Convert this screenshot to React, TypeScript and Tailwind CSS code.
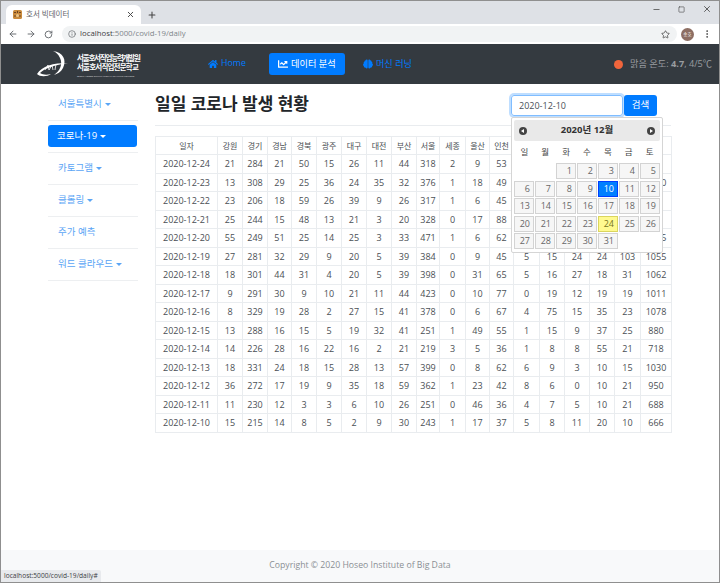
import { ArrowLeft, ArrowRight, Info, Minus, MoreVertical, Plus, RotateCw, Square, Star, X } from "lucide-react";
import { FaBrain, FaChartLine, FaHome } from "react-icons/fa";

const colWidths = [62, 25, 25, 24, 25, 25, 25, 25, 25, 23, 26, 24, 24, 26, 25, 25, 25, 26, 31];
// the last six column titles sit behind the date picker in the reference
const headers = ["일자", "강원", "경기", "경남", "경북", "광주", "대구", "대전", "부산", "서울", "세종", "울산", "인천", "", "", "", "", "", ""];

const rows: (string | number)[][] = [
  ["2020-12-24", 21, 284, 21, 50, 15, 26, 11, 44, 318, 2, 9, 53, "", "", "", "", "", ""],
  ["2020-12-23", 13, 308, 29, 25, 36, 24, 35, 32, 376, 1, 18, 49, "", "", "", "", "", 1090],
  ["2020-12-22", 23, 206, 18, 59, 26, 39, 9, 26, 317, 1, 6, 45, "", "", "", "", "", ""],
  ["2020-12-21", 25, 244, 15, 48, 13, 21, 3, 20, 328, 0, 17, 88, "", "", "", "", "", ""],
  ["2020-12-20", 55, 249, 51, 25, 14, 25, 3, 33, 471, 1, 6, 62, "", "", "", "", "", 1045],
  ["2020-12-19", 27, 281, 32, 29, 9, 20, 5, 39, 384, 0, 9, 45, 5, 15, 24, 24, 103, 1055],
  ["2020-12-18", 18, 301, 44, 31, 4, 20, 5, 39, 398, 0, 31, 65, 5, 16, 27, 18, 31, 1062],
  ["2020-12-17", 9, 291, 30, 9, 10, 21, 11, 44, 423, 0, 10, 77, 0, 19, 12, 19, 19, 1011],
  ["2020-12-16", 8, 329, 19, 28, 2, 27, 15, 41, 378, 0, 6, 67, 4, 75, 15, 35, 23, 1078],
  ["2020-12-15", 13, 288, 16, 15, 5, 19, 32, 41, 251, 1, 49, 55, 1, 15, 9, 37, 25, 880],
  ["2020-12-14", 14, 226, 28, 16, 22, 16, 2, 21, 219, 3, 5, 36, 1, 8, 8, 55, 21, 718],
  ["2020-12-13", 18, 331, 24, 18, 15, 28, 13, 57, 399, 0, 8, 62, 6, 9, 3, 10, 15, 1030],
  ["2020-12-12", 36, 272, 17, 19, 9, 35, 18, 59, 362, 1, 23, 42, 8, 6, 0, 10, 21, 950],
  ["2020-12-11", 11, 230, 12, 3, 3, 6, 10, 26, 251, 0, 46, 36, 4, 7, 5, 10, 21, 688],
  ["2020-12-10", 15, 215, 14, 8, 5, 2, 9, 30, 243, 1, 17, 37, 5, 8, 11, 20, 10, 666],
];

const sideItems = [
  { label: "서울특별시", caret: true },
  { label: "코로나-19", caret: true, active: true },
  { label: "카토그램", caret: true },
  { label: "클롤링", caret: true },
  { label: "주가 예측", caret: false },
  { label: "워드 클라우드", caret: true },
];

const Caret = () => (
  <span className="ml-[3px] inline-block h-0 w-0 border-x-[3px] border-t-[3px] border-x-transparent border-t-current align-middle" />
);

const BrowserChrome = () => (
  <div className="shrink-0">
    <div className="flex h-[23px] items-end bg-[#dee1e6] pl-[5px]">
      <div className="flex h-[19px] w-[135px] items-center rounded-t-[6px] bg-white pl-[7px] pr-[6px]">
        <svg width="9" height="9" viewBox="0 0 9 9">
          <rect width="9" height="9" rx="1.5" fill="#c98a3c" />
          <path d="M1 2.5h2M6 2.5h2M1 6h2M6 6h2M4.5 1v2" stroke="#6b4423" strokeWidth="1" />
          <circle cx="4.5" cy="5.5" r="1.5" fill="#e8c48a" />
        </svg>
        <span className="ml-[4px] flex-1 text-[7.5px] text-[#5f6368]">호서 빅데이터</span>
        <X size={9} strokeWidth={2.5} className="text-[#444]" />
      </div>
      <Plus size={10} strokeWidth={2.5} className="mb-[4px] ml-[6px] text-[#444]" />
      <div className="flex-1" />
      <div className="mb-[10px] flex items-center gap-[17px] pr-[7px] text-[#444]">
        <Minus size={9} />
        <Square size={7} />
        <X size={10} />
      </div>
    </div>
    <div className="flex h-[20px] items-center bg-white pl-[7px] pr-[7px] text-[#5f6368]">
      <ArrowLeft size={10} strokeWidth={2.2} />
      <ArrowRight size={10} strokeWidth={2.2} className="ml-[8px]" />
      <RotateCw size={9} strokeWidth={2.4} className="ml-[8px]" />
      <div className="ml-[9px] flex h-[16px] flex-1 items-center rounded-full bg-[#f1f3f4] pl-[6px] pr-[7px]">
        <Info size={8} />
        <span className="ml-[4px] flex-1 text-[7.8px]">
          <span className="text-[#3c4043]">localhost</span>
          <span className="text-[#80868b]">:5000/covid-19/daily</span>
        </span>
        <Star size={9} className="text-[#444]" />
      </div>
      <div className="ml-[4px] flex h-[13px] w-[13px] items-center justify-center rounded-full bg-[#8d6e63] text-[4.5px] text-white">송호</div>
      <MoreVertical size={10} className="ml-[8px] text-[#444]" />
    </div>
  </div>
);

const Logo = () => (
  <div className="flex items-center">
    <svg width="36" height="27" viewBox="0 0 36 27" fill="none">
      <path d="M16 0C26 1 30 9 26 17C24 21 20 23 17 24C23 20 26 13 23 7C21 3 19 1 16 0Z" fill="#fff" />
      <path d="M0 23C5 15 16 12 31 12C18 14 8 17 3 22C6 24 10 24 14 23C10 26 3 26 0 23Z" fill="#fff" />
      <path d="M8 19L11 14L12 19L15 14L16 19M19 13L18 19" stroke="#fff" strokeWidth="0.8" />
    </svg>
    <div className="ml-[4px] flex w-[67px] flex-col items-start whitespace-nowrap pt-[3px] text-white">
      <span className="text-[7.5px] font-bold leading-[9px] tracking-[-1.2px]">서울호서직업능력개발원</span>
      <span className="text-[7.5px] font-bold leading-[8px] tracking-[-0.8px]">서울호서직업전문학교</span>
      <span className="mt-[3px] text-[2.4px] leading-[4px] text-[#ddd]">SEOUL HOSEO OCCUPATIONAL TRAINING COLLEGE</span>
    </div>
  </div>
);

const NavBar = () => (
  <div className="flex h-[40px] shrink-0 items-center bg-[#343a40] pl-[36px] pr-[7px] text-[9.2px]">
    <Logo />
    <a className="ml-[64px] flex items-center text-[#007bff]">
      <FaHome size={10} />
      <span className="ml-[3px] text-[8.8px]">Home</span>
    </a>
    <a className="ml-[23px] flex h-[22px] w-[76px] items-center justify-center rounded-[3px] bg-[#007bff] text-white">
      <FaChartLine size={10} />
      <span className="ml-[3px]">데이터 분석</span>
    </a>
    <a className="ml-[18px] flex items-center text-[#007bff]">
      <FaBrain size={10} />
      <span className="ml-[3px]">머신 러닝</span>
    </a>
    <div className="flex-1" />
    <span className="h-[9px] w-[9px] rounded-full bg-[#f0653c]" />
    <span className="ml-[7px] text-[#9a9da0]">
      맑음 온도: <b>4.7</b>, 4/5℃
    </span>
  </div>
);

const Sidebar = () => (
  <div className="w-[90px] shrink-0 pt-[4.5px] text-[9.5px]">
    {sideItems.map((item) => (
      <div key={item.label} className="flex h-[32px] items-center border-b border-[#edeff1]">
        <div
          className={
            item.active
              ? "flex h-[22px] w-[89px] items-center rounded-[3px] bg-[#007bff] pl-[9px] text-white"
              : "flex items-center pl-[10px] text-[#5aa5f5]"
          }
        >
          {item.label}
          {item.caret && <Caret />}
        </div>
      </div>
    ))}
  </div>
);

const CalArrow = ({ right }: { right?: boolean }) => (
  <svg width="8" height="8" viewBox="0 0 8 8">
    <circle cx="4" cy="4" r="4" fill="#444" />
    <path d={right ? "M3 2L6 4L3 6Z" : "M5 2L2 4L5 6Z"} fill="#fff" />
  </svg>
);

const Calendar = () => {
  const days = Array.from({ length: 31 }, (_, i) => i + 1);
  return (
    <div className="absolute left-0 top-[22px] z-10 w-[152px] rounded-[2px] border border-[#d5d5d5] bg-white p-[2px] pb-[3px] text-[9px] text-[#666]">
      <div className="flex h-[21px] items-center justify-between rounded-[2px] bg-[#e9e9e9] px-[5px]">
        <CalArrow />
        <span className="text-[9.5px] font-bold text-[#333]">2020년 12월</span>
        <CalArrow right />
      </div>
      <div className="grid h-[22px] grid-cols-7 items-center text-center text-[8.5px] text-[#454545]">
        {["일", "월", "화", "수", "목", "금", "토"].map((d) => (
          <span key={d}>{d}</span>
        ))}
      </div>
      <div className="grid grid-cols-[repeat(7,20px)] gap-x-[1px] gap-y-[1.5px]">
        {days.map((d) => (
          <span
            key={d}
            className={
              "flex h-[16px] items-center justify-end border pr-[3px] " +
              (d === 1 ? "col-start-3 " : "") +
              (d === 10
                ? "border-[#003eff] bg-[#007fff] text-white"
                : d === 24
                  ? "border-[#dad55e] bg-[#fffa90] text-[#777620]"
                  : "border-[#d3d3d3] bg-[#f6f6f6]")
            }
          >
            {d}
          </span>
        ))}
      </div>
    </div>
  );
};

const CovidTable = () => (
  <table className="mt-[10px] w-[516px] table-fixed border-collapse text-center text-[9px] text-[#4a4f54]">
    <colgroup>
      {colWidths.map((w, i) => (
        <col key={i} width={w} />
      ))}
    </colgroup>
    <thead>
      <tr className="h-[18px]">
        {headers.map((h, i) => (
          <th key={i} className="overflow-hidden whitespace-nowrap border border-[#e9ecef] text-[8px] font-normal">
            {h}
          </th>
        ))}
      </tr>
    </thead>
    <tbody>
      {rows.map((row) => (
        <tr key={row[0]} className="h-[18.53px]">
          {row.map((v, i) => (
            <td key={i} className="overflow-visible whitespace-nowrap border border-[#e9ecef] p-0">
              {v}
            </td>
          ))}
        </tr>
      ))}
    </tbody>
  </table>
);

export default function App() {
  return (
    <div className="relative flex h-[583px] w-[720px] flex-col overflow-hidden border border-[#8f8f8f] bg-white font-['Open_Sans','Noto_Sans_CJK_KR',sans-serif]">
      <BrowserChrome />
      <NavBar />
      <div className="flex flex-1 pl-[47px]">
        <Sidebar />
        <div className="ml-[17px] w-[516px]">
          <div className="flex h-[42px] items-start justify-between border-b border-[#e9ecef] pr-[14px]">
            <h1 className="mt-[9px] text-[17px] font-bold leading-[22px] text-[#212529]">일일 코로나 발생 현황</h1>
            <div className="relative mt-[11px] flex gap-[1px]">
              <input
                readOnly
                value="2020-12-10"
                className="h-[21px] w-[112px] rounded-[3px] border border-[#80bdff] pl-[7px] text-[9px] text-[#495057] shadow-[0_0_0_2px_rgba(0,123,255,0.25)] outline-none"
              />
              <button className="h-[21px] w-[33px] rounded-[3px] bg-[#007bff] text-[9.5px] text-white">검색</button>
              <Calendar />
            </div>
          </div>
          <CovidTable />
        </div>
      </div>
      <div className="flex h-[32px] shrink-0 items-center justify-center bg-[#f8f9fa] text-[8.7px] text-[#8a8f94]">
        Copyright © 2020 Hoseo Institute of Big Data
      </div>
      <div className="absolute bottom-0 left-0 flex h-[12px] w-[100px] items-center rounded-tr-[2px] bg-[#e8eaed] px-[3px] text-[6.6px] text-[#3c4043]">
        localhost:5000/covid-19/daily#
      </div>
    </div>
  );
}
